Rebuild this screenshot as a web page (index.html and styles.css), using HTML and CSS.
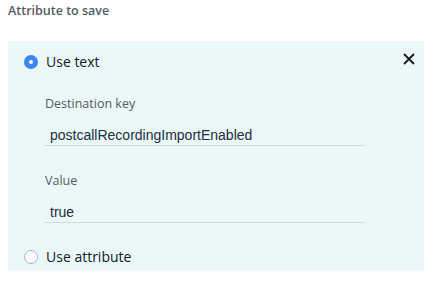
FILE: index.html
```html
<!DOCTYPE html>
<html>
<head>
<meta charset="utf-8">
<link rel="stylesheet" href="styles.css">
</head>
<body>
<div class="heading">Attribute to save</div>
<div class="panel">
  <div class="option">
    <span class="radio radio-on"></span>
    <span class="option-label">Use text</span>
    <svg class="close" width="12" height="12" viewBox="0 0 12 12"><path d="M1 1L11 11M11 1L1 11" stroke="#16191f" stroke-width="1.8" fill="none"/></svg>
  </div>
  <div class="fields">
    <div class="field">
      <div class="label">Destination key</div>
      <div class="input">postcallRecordingImportEnabled</div>
    </div>
    <div class="field field-second">
      <div class="label">Value</div>
      <div class="input">true</div>
    </div>
  </div>
  <div class="option option-last">
    <span class="radio"></span>
    <span class="option-label">Use attribute</span>
  </div>
</div>
</body>
</html>
```
FILE: styles.css
```css
html, body {
  margin: 0;
  padding: 0;
  background: #ffffff;
}
body {
  padding: 3px 8px 0 8px;
  font-family: "Open Sans", "Liberation Sans", sans-serif;
}
.heading {
  font-size: 12.5px;
  line-height: 16px;
  font-weight: 600;
  color: #545b64;
}
.panel {
  margin-top: 22px;
  width: 416px;
  height: 229px;
  box-sizing: border-box;
  background: #eaf8f9;
  padding: 11px 0 0 16px;
  display: flex;
  flex-direction: column;
}
.option {
  display: flex;
  align-items: center;
  height: 20px;
  gap: 8px;
}
.option-label {
  font-size: 14px;
  line-height: 20px;
  color: #16191f;
  flex: 1;
}
.radio {
  width: 14px;
  height: 14px;
  box-sizing: border-box;
  border-radius: 50%;
  background: #ffffff;
  border: 1px solid #aab7b8;
  flex: none;
}
.radio-on {
  border: 5px solid #3d85f5;
  background: #ffffff;
}
.close {
  margin-right: 9px;
  margin-bottom: 6px;
  flex: none;
}
.fields {
  padding-left: 20px;
  width: 321px;
  margin-top: 24px;
}
.field-second {
  margin-top: 27px;
}
.label {
  font-size: 12.5px;
  line-height: 16px;
  color: #545b64;
  padding-left: 1px;
}
.input {
  margin-top: 13px;
  font-family: "Liberation Sans", Arial, sans-serif;
  font-size: 14px;
  line-height: 20px;
  color: #232f3e;
  padding-left: 6px;
  border-bottom: 1px solid #d5dbdb;
}
.option-last {
  margin-top: 24px;
}
```
